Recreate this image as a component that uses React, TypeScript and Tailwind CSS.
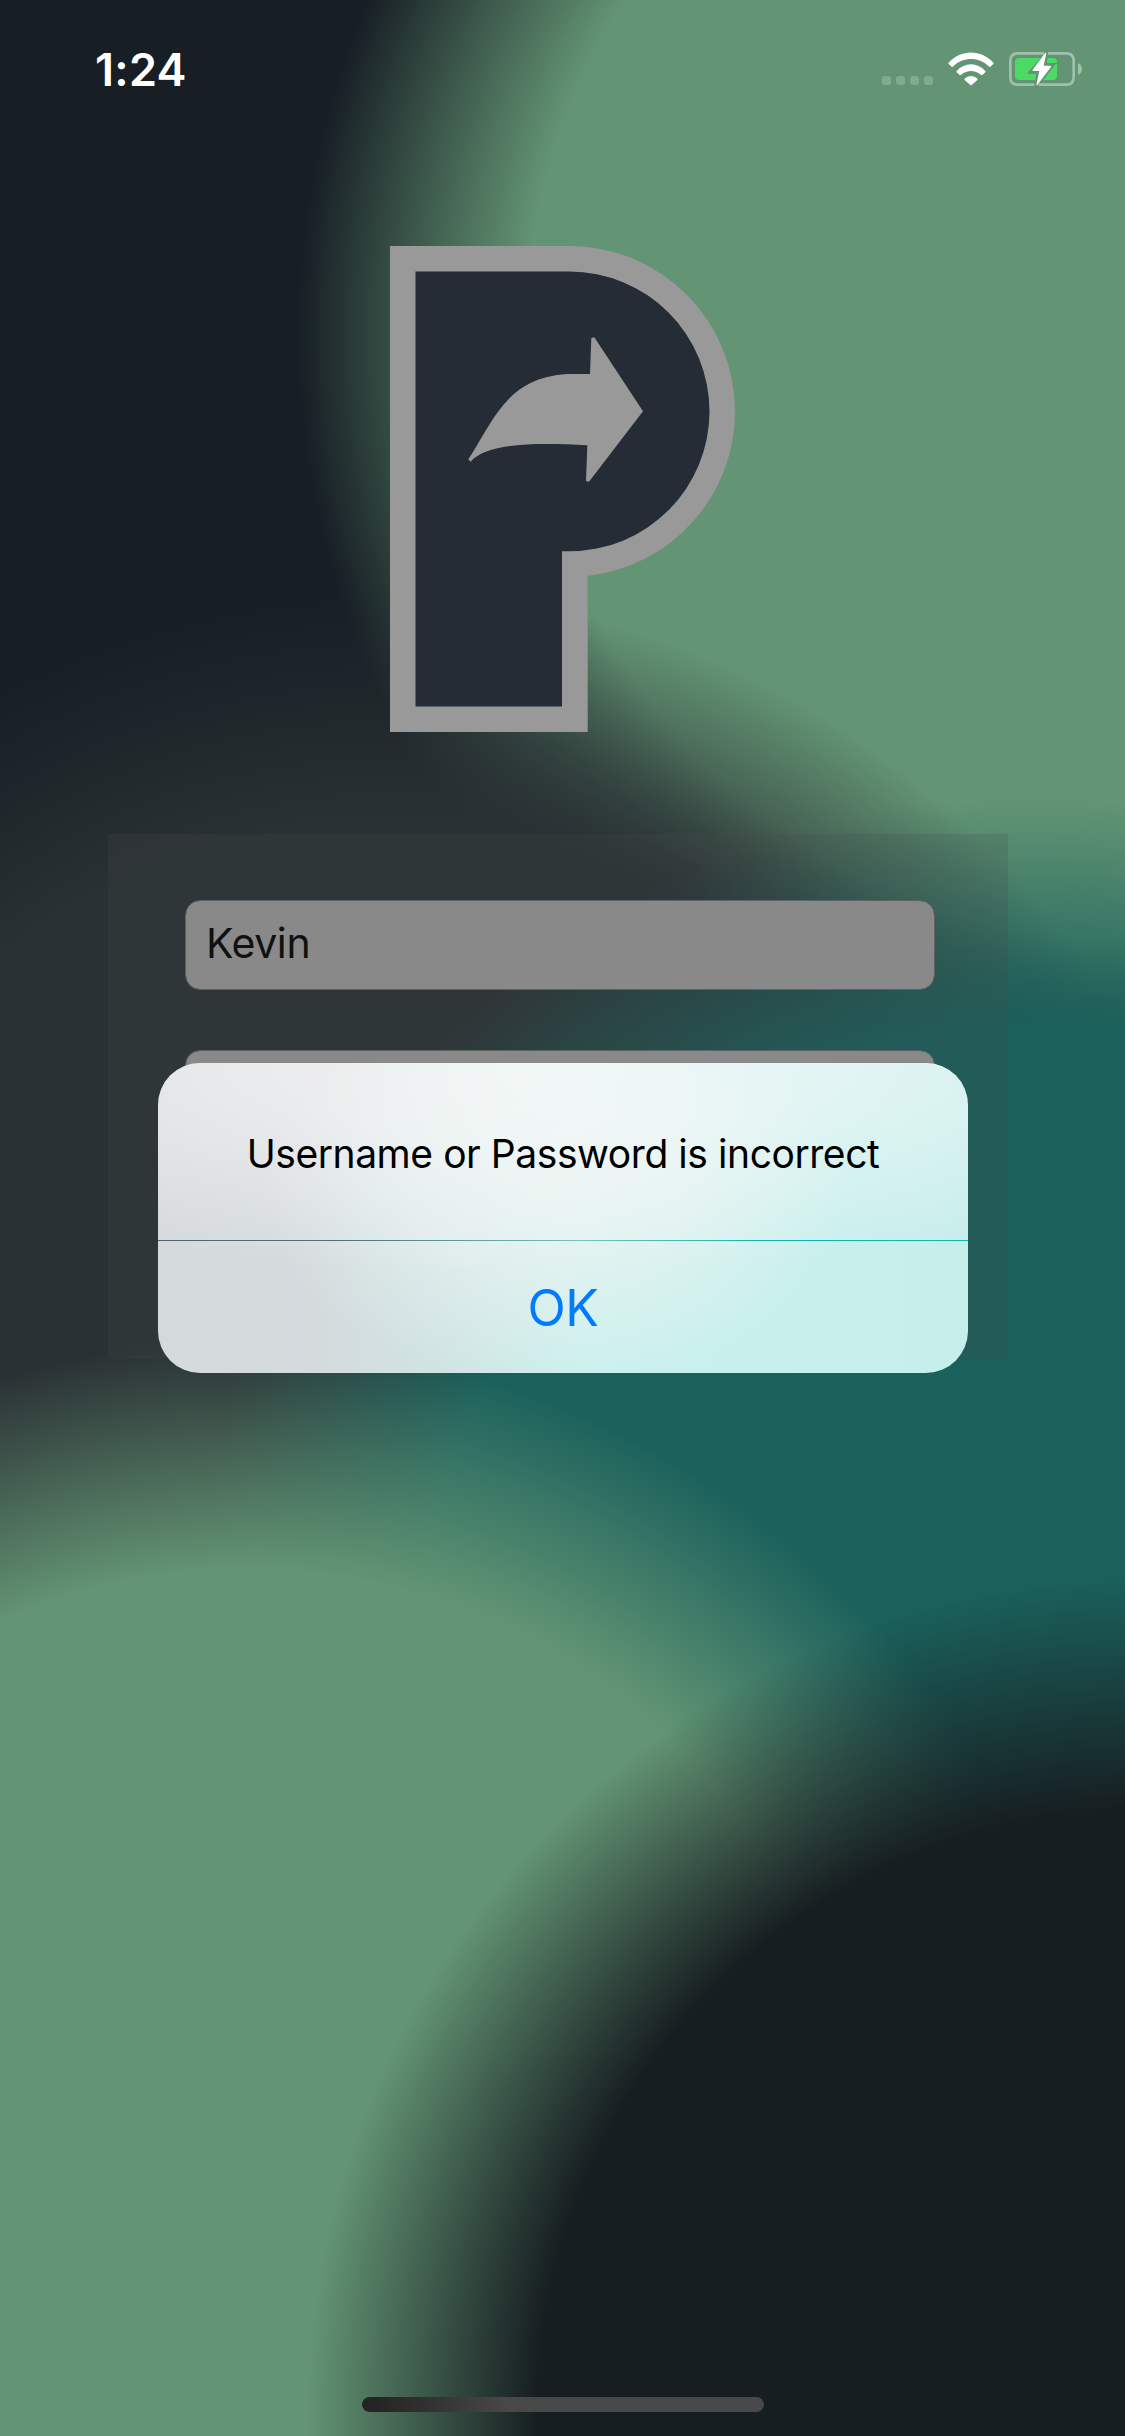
import React from "react";

const glows = [
  { id: "moss", cx: 731, cy: 215, color: "#639574" },
  { id: "slate", cx: 250, cy: 921, color: "#2a3134" },
  { id: "teal", cx: 668, cy: 1053, color: "#1a605b" },
  { id: "moss-low", cx: 160, cy: 1403, color: "#639574" },
  { id: "ink", cx: 737, cy: 1556, color: "#171e21" },
];

function Backdrop() {
  return (
    <svg
      className="absolute inset-0 h-full w-full"
      viewBox="0 0 724 1568"
      preserveAspectRatio="none"
      aria-hidden="true"
    >
      <defs>
        {glows.map((g) => (
          <radialGradient key={g.id} id={g.id}>
            <stop offset="0.725" stopColor={g.color} />
            <stop offset="1" stopColor={g.color} stopOpacity="0" />
          </radialGradient>
        ))}
      </defs>
      <rect width="724" height="1568" fill="#171e24" />
      {glows.map((g) => (
        <circle key={g.id} cx={g.cx} cy={g.cy} r="540" fill={`url(#${g.id})`} />
      ))}
    </svg>
  );
}

function StatusBar() {
  return (
    <header className="flex h-[138px] items-center justify-between pr-[43px] pl-[95px]">
      <span className="text-[45px] leading-none font-semibold tracking-[0.3px] text-white">1:24</span>
      <div className="flex items-center">
        <div className="mt-[23px] mr-[15px] flex gap-[5px]">
          <i className="size-[9px] rounded-[3px] bg-white/20" />
          <i className="size-[9px] rounded-[3px] bg-white/20" />
          <i className="size-[9px] rounded-[3px] bg-white/20" />
          <i className="size-[9px] rounded-[3px] bg-white/20" />
        </div>
        <svg className="mr-[15px] h-[34px] w-[46px]" viewBox="0 0 138 102" fill="#fff">
          <path d="M2 32C39-9 99-9 136 32Q138 34 136 36L127 44Q125 46 122 43C92 14 46 14 16 43Q13 46 11 44L2 36Q0 34 2 32Z" />
          <path d="M26 57C50 30 88 30 112 57Q114 59 112 61L103 69Q101 70 98 68C81 53 57 53 40 68Q37 70 35 69L26 61Q24 59 26 57Z" />
          <path d="M50 80C61 69 77 69 88 80Q90 82 88 84L71 99Q69 101 67 99L50 84Q48 82 50 80Z" />
        </svg>
        <svg className="h-[34px] w-[73px]" viewBox="0 0 219 102">
          <path
            d="M105 4H26Q4 4 4 26V76Q4 98 26 98H76M117 4H172Q194 4 194 26V76Q194 98 172 98H88"
            fill="none"
            stroke="#fff"
            strokeOpacity=".4"
            strokeWidth="8"
          />
          <path d="M207 33Q219 39 219 51Q219 63 207 69Z" fill="#fff" fillOpacity=".4" />
          <path
            d="M30 18H95L55 63Q56 66 62 66H82L78 84H30Q18 84 18 72V30Q18 18 30 18ZM116 18H132Q144 18 144 30V33H113ZM140 36H144V72Q144 84 132 84H103Z"
            fill="#4cd964"
          />
          <path d="M109 2L112 4L104 41H124Q128 42 126 45L85 99L82 98L91 57H73Q69 56 71 53Z" fill="#fff" />
        </svg>
      </div>
    </header>
  );
}

function Logo() {
  return (
    <svg className="mt-[108px] h-[486px] w-[345px] self-center" viewBox="390 246 345 486">
      <path d="M390 246H569.5A165.5 165.5 0 0 1 735 411.5A165.5 165.5 0 0 1 587.7 575.9V732H390Z" fill="#999" />
      <path
        d="M415.5 271.5H569.5A140 140 0 0 1 709.5 411.5A140 140 0 0 1 569.5 551.3H562V706.5H415.5Z"
        fill="#252c36"
      />
      <g transform="translate(370 230) scale(.33333)">
        <path
          d="M664 324L673 322L819 544L657 755L648 753L652 646C500 638 352 638 302 695L295 688C370 575 412 432 610 432H660Z"
          fill="#999"
        />
      </g>
    </svg>
  );
}

function Field({ value, type, label }: { value: string; type: string; label: string }) {
  return (
    <input
      aria-label={label}
      type={type}
      defaultValue={value}
      className="block h-[90px] w-full rounded-[15px] border border-[#5c6263] bg-[#898989] bg-clip-padding px-5 pb-[4px] text-[41px] tracking-[-0.4px] text-[#111] outline-none"
    />
  );
}

function Alert() {
  return (
    <div
      role="alertdialog"
      className="absolute top-[1063px] left-[158px] flex h-[310px] w-[810px] flex-col overflow-hidden rounded-[42px] bg-[linear-gradient(90deg,#d5d9dc_0%,#d4dbdd_20%,#cfe4e4_36%,#caf0ed_52%,#c7f0ed_75%,#c6eeeb_100%)]"
    >
      <div className="absolute inset-0 bg-[radial-gradient(ellipse_36%_62%_at_49%_42%,rgba(234,243,241,0.85)_0%,rgba(234,243,241,0.6)_45%,rgba(234,243,241,0)_100%)]" />
      <div className="absolute inset-0 bg-[radial-gradient(ellipse_100%_68%_at_46%_0%,rgba(255,251,251,0.68)_0%,rgba(255,251,251,0.5)_35%,rgba(255,251,251,0)_100%)]" />
      <p className="relative flex h-[177px] items-center justify-center pt-[4px] text-[39px] leading-none tracking-[-0.44px] whitespace-nowrap text-black">
        Username or Password is incorrect
      </p>
      <div className="relative h-px shrink-0 bg-[linear-gradient(90deg,#4a6473_0%,#4c717c_22%,#76c1c3_52%,#10b5ad_75%,#10b5ad_100%)]" />
      <button className="relative flex flex-1 items-center justify-center pt-[2px] text-[50px] leading-none tracking-[-0.5px] text-[#007aff]">
        OK
      </button>
    </div>
  );
}

export default function App() {
  return (
    <main className="relative flex h-[2436px] w-[1125px] flex-col overflow-hidden bg-[#171e24] font-['Inter','Liberation_Sans',sans-serif]">
      <Backdrop />
      <div className="relative flex flex-1 flex-col">
        <StatusBar />
        <Logo />
        <form className="mt-[102px] ml-[108px] flex h-[525px] w-[900px] flex-col gap-[60px] bg-[#444a4d]/20 pt-[66px] pr-[73px] pl-[77px]">
          <Field label="Username" type="text" value="Kevin" />
          <Field label="Password" type="password" value="" />
        </form>
        <div className="mt-auto mb-[24px] h-[15px] w-[402px] self-center rounded-full bg-[linear-gradient(90deg,#222_0%,#2d2d2d_12%,#484848_36%,#484848_100%)]" />
      </div>
      <Alert />
    </main>
  );
}
